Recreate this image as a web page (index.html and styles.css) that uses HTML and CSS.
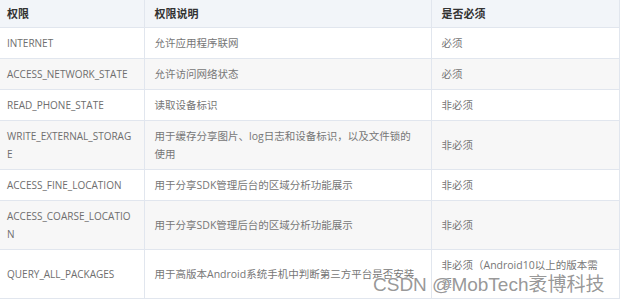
FILE: index.html
```html
<!DOCTYPE html>
<html lang="zh">
<head>
<meta charset="utf-8">
<link rel="stylesheet" href="styles.css">
</head>
<body>
<div class="wrap">
<table class="perm">
<colgroup><col class="c1"><col class="c2"><col class="c3"></colgroup>
<thead>
<tr><th>权限</th><th>权限说明</th><th>是否必须</th></tr>
</thead>
<tbody>
<tr><td>INTERNET</td><td>允许应用程序联网</td><td>必须</td></tr>
<tr><td>ACCESS_NETWORK_STATE</td><td>允许访问网络状态</td><td>必须</td></tr>
<tr><td>READ_PHONE_STATE</td><td>读取设备标识</td><td>非必须</td></tr>
<tr><td>WRITE_EXTERNAL_STORAGE</td><td>用于缓存分享图片、log日志和设备标识，以及文件锁的使用</td><td>非必须</td></tr>
<tr><td>ACCESS_FINE_LOCATION</td><td>用于分享SDK管理后台的区域分析功能展示</td><td>非必须</td></tr>
<tr><td>ACCESS_COARSE_LOCATION</td><td>用于分享SDK管理后台的区域分析功能展示</td><td>非必须</td></tr>
<tr><td>QUERY_ALL_PACKAGES</td><td>用于高版本Android系统手机中判断第三方平台是否安装</td><td>非必须（Android10以上的版本需要）</td></tr>
</tbody>
</table>
<div class="watermark">CSDN @MobTech袤博科技</div>
</div>
</body>
</html>
```
FILE: styles.css
```css
html, body {
  margin: 0;
  padding: 0;
  background: #fff;
}
.wrap {
  position: relative;
  width: 622px;
  height: 299px;
  overflow: hidden;
}
.perm {
  border-collapse: collapse;
  table-layout: fixed;
  width: 619px;
  font-family: "Open Sans", "Noto Sans CJK SC", sans-serif;
}
.c1 { width: 144px; }
.c2 { width: 287px; }
.c3 { width: 188px; }
.perm th {
  background: #f2f5f9;
  color: #333;
  font-weight: bold;
  font-size: 11px;
  line-height: 15px;
  text-align: left;
  padding: 6px 10px 6px 10px;
  border-right: 1px solid #e1e6ee;
  border-bottom: 1px solid #e1e6ee;
  font-family: "Noto Sans CJK SC", sans-serif;
}
.perm td {
  color: #767676;
  font-size: 10.5px;
  line-height: 18px;
  padding: 6px 10px;
  vertical-align: middle;
  border-right: 1px solid #e1e6ee;
  border-bottom: 1px solid #e1e6ee;
  word-break: break-all;
}
.perm th:first-child,
.perm td:first-child {
  padding-left: 7px;
  padding-right: 7px;
}
.perm td:first-child {
  font-size: 10px;
  color: #6e6e6e;
}
.perm tbody tr:nth-child(even) td {
  background: #f7f7f7;
}
.watermark {
  position: absolute;
  left: 373px;
  top: 274px;
  font-family: "Liberation Sans", "Noto Sans CJK SC", sans-serif;
  font-size: 19px;
  line-height: 22px;
  color: rgba(125, 125, 125, 0.8);
  text-shadow: 0 0 2px #fff, 0 0 1px #fff;
  white-space: nowrap;
}
```
